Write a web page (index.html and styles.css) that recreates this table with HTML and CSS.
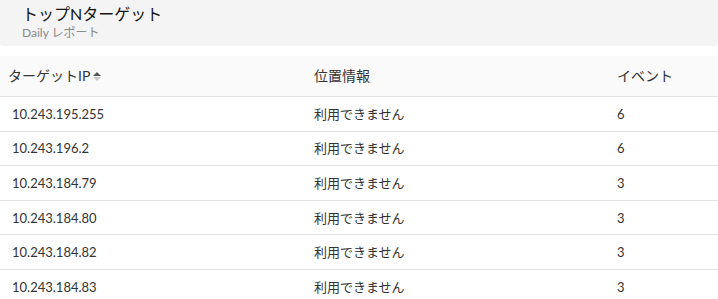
FILE: index.html
```html
<!DOCTYPE html>
<html lang="ja">
<head>
<meta charset="utf-8">
<link rel="stylesheet" href="styles.css">
</head>
<body>
<div class="widget">
  <div class="widget-head">
    <div class="title">トップNターゲット</div>
    <div class="subtitle">Daily レポート</div>
  </div>
  <table class="grid">
    <thead>
      <tr>
        <th class="c1">ターゲットIP<span class="sort"><span class="up"></span><span class="down"></span></span></th>
        <th class="c2">位置情報</th>
        <th class="c3">イベント</th>
      </tr>
    </thead>
    <tbody>
      <tr><td class="c1">10.243.195.255</td><td class="c2">利用できません</td><td class="c3">6</td></tr>
      <tr><td class="c1">10.243.196.2</td><td class="c2">利用できません</td><td class="c3">6</td></tr>
      <tr><td class="c1">10.243.184.79</td><td class="c2">利用できません</td><td class="c3">3</td></tr>
      <tr><td class="c1">10.243.184.80</td><td class="c2">利用できません</td><td class="c3">3</td></tr>
      <tr><td class="c1">10.243.184.82</td><td class="c2">利用できません</td><td class="c3">3</td></tr>
      <tr><td class="c1">10.243.184.83</td><td class="c2">利用できません</td><td class="c3">3</td></tr>
    </tbody>
  </table>
</div>
</body>
</html>
```
FILE: styles.css
```css
html, body {
  margin: 0;
  padding: 0;
  background: #ffffff;
}
body {
  font-family: "Lato", "Noto Sans CJK JP", sans-serif;
  color: #333333;
  overflow: hidden;
}
.widget {
  width: 718px;
}
.widget-head {
  background: #f4f4f4;
  height: 46px;
  box-sizing: border-box;
  padding: 3px 0 0 22px;
  border-bottom-left-radius: 3px;
  border-bottom-right-radius: 3px;
}
.title {
  font-size: 16px;
  line-height: 22px;
  color: #151515;
}
.subtitle {
  font-size: 12px;
  line-height: 14px;
  margin-top: 1px;
  color: #8a8a8a;
}
.grid {
  margin-top: 10px;
  width: 718px;
  border-collapse: collapse;
  table-layout: fixed;
}
.grid th {
  background: #fafafa;
  font-weight: normal;
  font-size: 14px;
  line-height: 20px;
  text-align: left;
  height: 40px;
  padding: 0;
  border-bottom: 1px solid #e2e2e2;
  color: #333333;
}
.grid td {
  font-size: 13px;
  line-height: 18px;
  height: 33.6px;
  padding: 0;
  border-bottom: 1px solid #e2e2e2;
  color: #333333;
}
.grid th.c1 { padding-left: 8px; width: 306px; box-sizing: border-box; }
.grid td.c1 { padding-left: 12px; }
.grid .c2 { padding-left: 8px; width: 303px; box-sizing: border-box; }
.grid .c3 { padding-left: 8px; }
.sort {
  display: inline-flex;
  flex-direction: column;
  gap: 1px;
  vertical-align: middle;
  margin-left: 3px;
  position: relative;
  top: -1px;
}
.up {
  width: 0;
  height: 0;
  border-left: 4px solid transparent;
  border-right: 4px solid transparent;
  border-bottom: 4px solid #555555;
}
.down {
  width: 0;
  height: 0;
  border-left: 4px solid transparent;
  border-right: 4px solid transparent;
  border-top: 4px solid #c8c8c8;
}
```
